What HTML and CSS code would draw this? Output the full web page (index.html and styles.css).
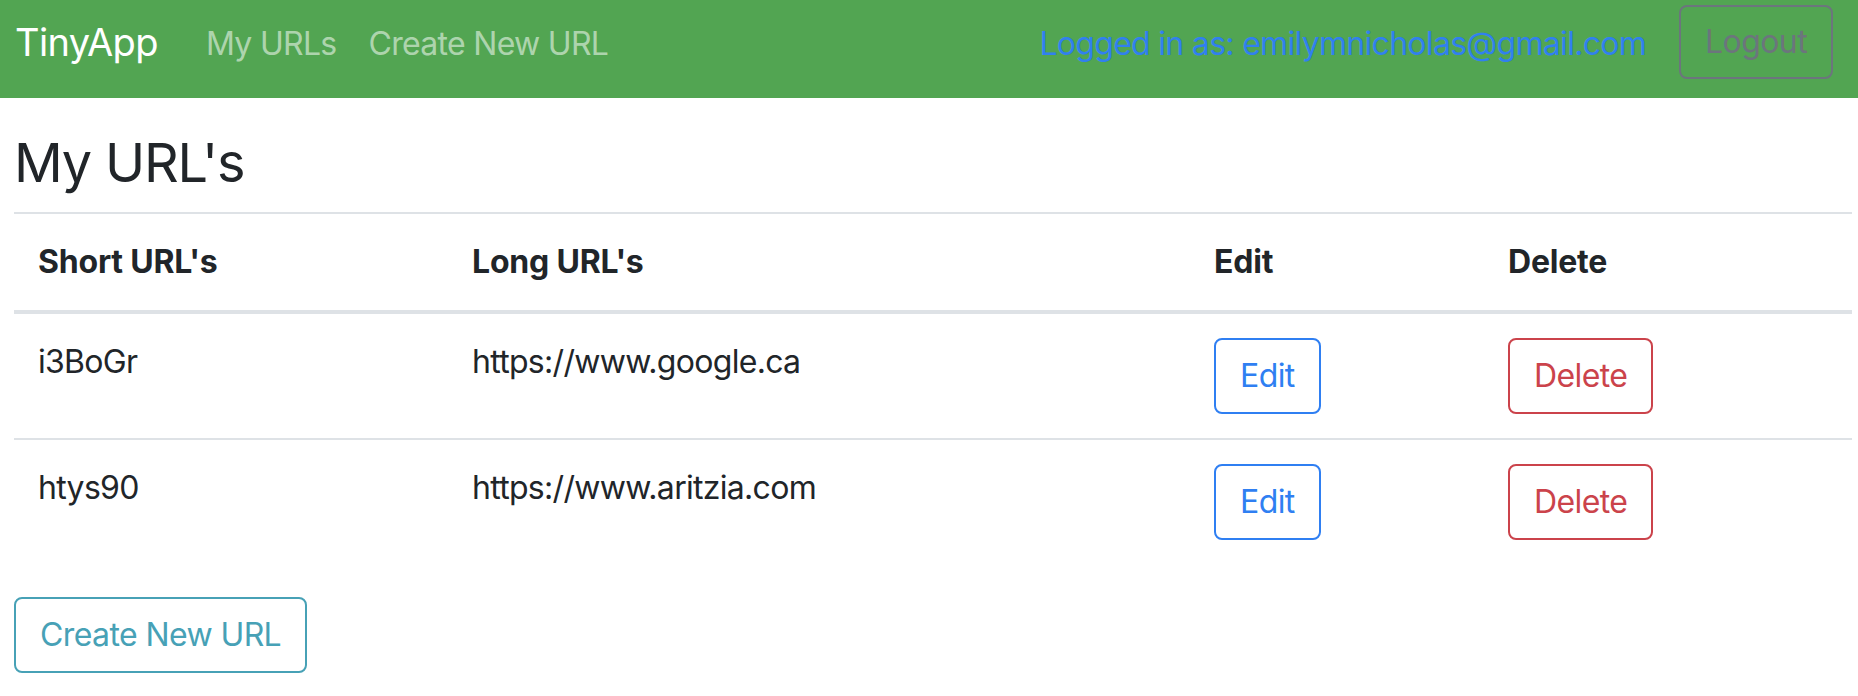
FILE: index.html
```html
<!DOCTYPE html>
<html lang="en">
<head>
<meta charset="utf-8">
<title>TinyApp</title>
<link rel="stylesheet" href="styles.css">
</head>
<body>
<nav class="navbar">
  <a class="brand" href="#">TinyApp</a>
  <div class="nav-links">
    <a class="nav-link" href="#">My URLs</a>
    <a class="nav-link" href="#">Create New URL</a>
  </div>
  <div class="nav-right">
    <span class="user">Logged in as: emilymnicholas@gmail.com</span>
    <button class="btn btn-logout" type="button">Logout</button>
  </div>
</nav>
<main class="content">
  <h3 class="title">My URL's</h3>
  <table class="url-table">
    <colgroup>
      <col class="c1"><col class="c2"><col class="c3"><col class="c4">
    </colgroup>
    <thead>
      <tr><th>Short URL's</th><th>Long URL's</th><th>Edit</th><th>Delete</th></tr>
    </thead>
    <tbody>
      <tr>
        <td>i3BoGr</td>
        <td>https://www.google.ca</td>
        <td><button class="btn btn-edit" type="button">Edit</button></td>
        <td><button class="btn btn-delete" type="button">Delete</button></td>
      </tr>
      <tr>
        <td>htys90</td>
        <td>https://www.aritzia.com</td>
        <td><button class="btn btn-edit" type="button">Edit</button></td>
        <td><button class="btn btn-delete" type="button">Delete</button></td>
      </tr>
    </tbody>
  </table>
  <button class="btn btn-create" type="button">Create New URL</button>
</main>
</body>
</html>
```
FILE: styles.css
```css
* { box-sizing: border-box; }
body {
  margin: 0;
  font-family: Inter, "Noto Sans", sans-serif;
  font-size: 32px;
  letter-spacing: -0.7px;
  color: #212529;
  background: #fff;
}
a { text-decoration: none; }

.navbar {
  display: flex;
  align-items: flex-start;
  height: 98px;
  background: #52a552;
  padding: 0 25px 0 15px;
}
.brand {
  font-size: 38px;
  letter-spacing: -0.6px;
  line-height: 60px;
  margin-top: 12px;
  margin-right: 32px;
  color: #fff;
}
.nav-links { display: flex; margin-top: 20px; }
.nav-link {
  font-size: 32px;
  line-height: 48px;
  padding: 0 16px;
  color: rgba(255,255,255,0.55);
}
.nav-right {
  margin-left: auto;
  display: flex;
  align-items: flex-start;
}
.user {
  font-size: 32px;
  line-height: 48px;
  margin-top: 20px;
  margin-right: 33px;
  color: #3080ef;
}
.btn {
  font-family: inherit;
  font-size: 32px;
  letter-spacing: -0.6px;
  line-height: 48px;
  padding: 12px 24px;
  border: 2px solid;
  border-radius: 8px;
  background: transparent;
  cursor: pointer;
}
.btn-logout {
  margin-top: 5px;
  padding: 11px 24px;
  color: #6c757d;
  border-color: #6c757d;
}

.content { padding: 0 6px 0 14px; }
.title {
  font-size: 54px;
  letter-spacing: -1.2px;
  line-height: 67px;
  font-weight: 400;
  margin: 31px 0 16px;
}
.url-table {
  width: 100%;
  border-collapse: collapse;
  table-layout: fixed;
  margin-bottom: 33px;
}
.c1 { width: 434px; }
.c2 { width: 742px; }
.c3 { width: 294px; }
.url-table th,
.url-table td {
  padding: 24px;
  font-size: 32px;
  line-height: 48px;
  text-align: left;
  vertical-align: top;
  border-top: 2px solid #dee2e6;
}
.url-table th { font-weight: 700; letter-spacing: -0.2px; }
.url-table thead th { border-bottom: 4px solid #dee2e6; }

.btn-edit { color: #2f7ff2; border-color: #2f7ff2; }
.btn-delete { color: #cb434b; border-color: #cb434b; }
.btn-create { color: #47a1b6; border-color: #47a1b6; }
```
